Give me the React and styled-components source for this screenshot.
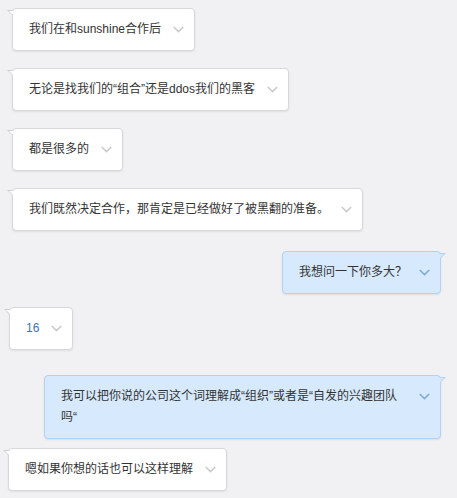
import React from "react";
import styled, { createGlobalStyle, css } from "styled-components";

const GlobalStyle = createGlobalStyle`
  html, body {
    margin: 0;
    padding: 0;
    background: #f1f1f4;
  }
  body {
    font-family: "Liberation Sans", "Noto Sans CJK SC", sans-serif;
  }
`;

const CsThread = styled.div`
  display: flex;
  flex-direction: column;
  padding: 8px 16px 8px 0;
  min-height: 498px;
  box-sizing: border-box;
`;

const CsRow = styled.div`
  display: flex;
  justify-content: ${({ mine }) => (mine ? "flex-end" : "flex-start")};
  margin-top: ${({ space }) => space || 0}px;
  padding-left: ${({ indent }) => indent}px;
`;

const CsBubble = styled.div`
  position: relative;
  display: flex;
  align-items: flex-start;
  gap: 12px;
  max-width: 397px;
  box-sizing: border-box;
  padding: 10px 10px 10px 16px;
  border-radius: 4px;
  border: 1px solid ${({ mine }) => (mine ? "#b3d2f1" : "#d8d8dc")};
  background: ${({ mine }) => (mine ? "#d6e9fd" : "#ffffff")};
  box-shadow: 0 1px 2px rgba(0, 0, 0, 0.08);

  &::before,
  &::after {
    content: "";
    position: absolute;
  }

  ${({ mine }) =>
    mine
      ? css`
          &::before {
            right: -6px;
            top: 1px;
            width: 6px;
            height: 6px;
            background: #b3d2f1;
            clip-path: polygon(0 0, 100% 0, 0 100%);
          }
          &::after {
            right: -4px;
            top: 2px;
            width: 4px;
            height: 4px;
            background: #d6e9fd;
            clip-path: polygon(0 0, 100% 0, 0 100%);
          }
        `
      : css`
          &::before {
            left: -6px;
            top: 1px;
            width: 6px;
            height: 6px;
            background: #d0d0d4;
            clip-path: polygon(0 0, 100% 0, 100% 100%);
          }
          &::after {
            left: -4px;
            top: 2px;
            width: 4px;
            height: 4px;
            background: #ffffff;
            clip-path: polygon(0 0, 100% 0, 100% 100%);
          }
        `}
`;

const CsText = styled.div`
  flex: 1;
  font-size: 12px;
  line-height: 21px;
  color: ${({ accent }) => (accent ? "#3f74b8" : "#333333")};
  word-break: break-all;
`;

const CsToggle = styled.span`
  flex: none;
  display: flex;
  align-items: center;
  height: 21px;
`;

function Chevron({ mine }) {
  return (
    <CsToggle>
      <svg width="11" height="7" viewBox="0 0 11 7">
        <polyline
          points="0.8,1 5.5,5.6 10.2,1"
          fill="none"
          stroke={mine ? "#7ea9d9" : "#c9c9cc"}
          strokeWidth="1.5"
        />
      </svg>
    </CsToggle>
  );
}

const messages = [
  { text: "我们在和sunshine合作后", space: 0, indent: 12 },
  { text: "无论是找我们的“组合”还是ddos我们的黑客", space: 17, indent: 12 },
  { text: "都是很多的", space: 17, indent: 12 },
  { text: "我们既然决定合作，那肯定是已经做好了被黑翻的准备。", space: 17, indent: 12 },
  { text: "我想问一下你多大？", space: 20, mine: true },
  { text: "16", space: 13, indent: 9, accent: true },
  {
    text: "我可以把你说的公司这个词理解成“组织”或者是“自发的兴趣团队吗“",
    space: 25,
    mine: true,
  },
  { text: "嗯如果你想的话也可以这样理解", space: 9, indent: 8 },
];

function App() {
  return (
    <>
      <GlobalStyle />
      <CsThread>
        {messages.map((m, i) => (
          <CsRow key={i} mine={m.mine} space={m.space} indent={m.indent || 0}>
            <CsBubble mine={m.mine}>
              <CsText accent={m.accent}>{m.text}</CsText>
              <Chevron mine={m.mine} />
            </CsBubble>
          </CsRow>
        ))}
      </CsThread>
    </>
  );
}

export default App;
